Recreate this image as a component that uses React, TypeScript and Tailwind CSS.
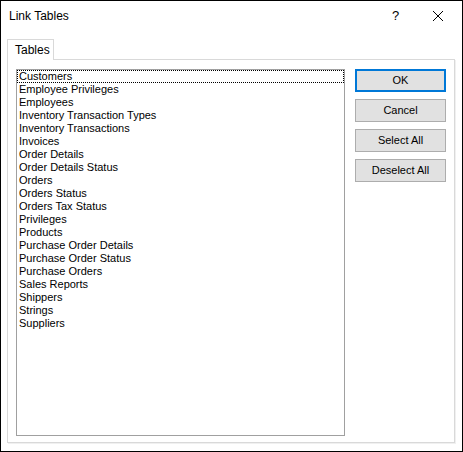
import React from "react";

const tables = [
  "Customers",
  "Employee Privileges",
  "Employees",
  "Inventory Transaction Types",
  "Inventory Transactions",
  "Invoices",
  "Order Details",
  "Order Details Status",
  "Orders",
  "Orders Status",
  "Orders Tax Status",
  "Privileges",
  "Products",
  "Purchase Order Details",
  "Purchase Order Status",
  "Purchase Orders",
  "Sales Reports",
  "Shippers",
  "Strings",
  "Suppliers",
];

function DialogButton({ label, primary }: { label: string; primary?: boolean }) {
  return (
    <button
      className={
        primary
          ? "w-[91px] h-[23px] bg-[#e1e1e1] border-2 border-[#0078d7] text-[11px] text-black flex items-center justify-center"
          : "w-[91px] h-[23px] bg-[#e1e1e1] border border-[#adadad] text-[11px] text-black flex items-center justify-center"
      }
    >
      {label}
    </button>
  );
}

export default function App() {
  return (
    <div
      className="w-[463px] h-[452px] border border-black bg-white flex flex-col text-black"
      style={{ fontFamily: '"Liberation Sans", Arial, sans-serif' }}
    >
      {/* title bar */}
      <div className="h-[30px] flex items-center pl-[8px] shrink-0">
        <span className="text-[12px] flex-1">Link Tables</span>
        <span className="text-[13px] w-[10px] mr-[30px]">?</span>
        <svg width="12" height="12" viewBox="0 0 12 12" className="mr-[18px]">
          <path d="M1 1 L11 11 M11 1 L1 11" stroke="#000" strokeWidth="1" fill="none" />
        </svg>
      </div>

      {/* tab strip */}
      <div className="pl-[6px] pt-[8px] shrink-0 flex">
        <div className="relative z-10 w-[47px] h-[21px] border border-b-0 border-[#d9d9d9] bg-white flex items-start pl-[7px] pt-[1px] text-[12px]">
          Tables
        </div>
      </div>

      {/* tab page */}
      <div className="ml-[6px] -mt-px w-[448px] h-[384px] border border-[#d9d9d9] shadow-[1px_1px_0_#f0f0f0] flex gap-[10px] pl-[8px] pt-[9px]">
        <div className="w-[329px] h-[367px] border border-[#a0a0a0] bg-white flex flex-col text-[11px] leading-[13px]">
          {tables.map((t, i) => (
            <div
              key={t}
              className={
                i === 0
                  ? "pl-[1px] outline-1 outline-dotted outline-black -outline-offset-1 h-[13px]"
                  : "pl-[2px] h-[13px]"
              }
            >
              <span className={i === 0 ? "pl-[1px]" : ""}>{t}</span>
            </div>
          ))}
        </div>
        <div className="flex flex-col gap-[7px]">
          <DialogButton label="OK" primary />
          <DialogButton label="Cancel" />
          <DialogButton label="Select All" />
          <DialogButton label="Deselect All" />
        </div>
      </div>
    </div>
  );
}
